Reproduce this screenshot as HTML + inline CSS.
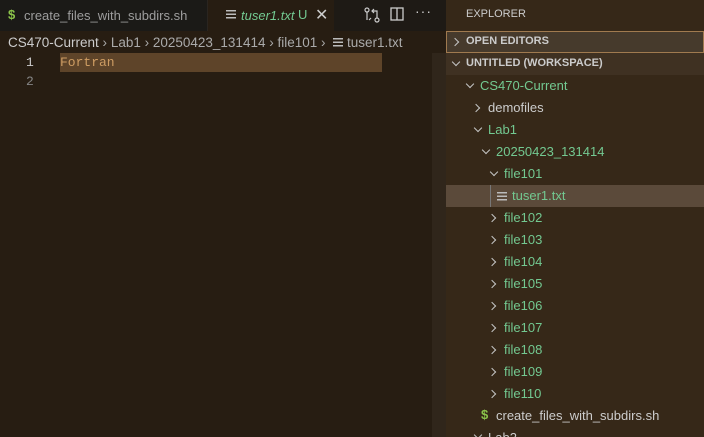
<!DOCTYPE html><html style="overflow:hidden;height:437px"><head><style>
body{margin:0;width:704px;height:437px;overflow:hidden;background:#271d12;font-family:"Liberation Sans",sans-serif;font-size:13px;position:relative}
.a{position:absolute;white-space:nowrap}
.g{color:#73c991}.w{color:#cccccc}
.chev{position:absolute;width:5px;height:5px;border-right:1.3px solid #c5c5c5;border-bottom:1.3px solid #c5c5c5}
.r{transform:rotate(-45deg)}.d{transform:rotate(45deg)}
.ic{position:absolute;width:10px;height:9px;background:linear-gradient(#bbb 0 1.5px,transparent 1.5px 3.5px,#bbb 3.5px 5px,transparent 5px 7px,#bbb 7px 8.5px,transparent 8.5px)}
</style></head><body>
<div class="a" style="left:0;top:0;width:446px;height:31px;background:#1e1a15"></div>
<div class="a" style="left:0;top:0;width:207px;height:31px;background:#1b1a17;border-right:1px solid #2a2520"></div>
<div class="a" style="left:208px;top:0;width:126px;height:31px;background:#271d12"></div>
<div class="a" style="left:8px;top:7px;color:#8bc34a;font-weight:bold">$</div>
<div class="a" style="left:24px;top:8px;color:#9d9d9d">create_files_with_subdirs.sh</div>
<div class="ic" style="left:226px;top:10px"></div>
<div class="a g" style="left:241px;top:8px;font-style:italic">tuser1.txt</div>
<div class="a g" style="left:298px;top:7px">U</div>
<div class="a w" style="left:315px;top:5px;font-size:16px">✕</div>
<svg class="a" style="left:363px;top:6px" width="18" height="18" viewBox="0 0 18 18" fill="none" stroke="#ccc" stroke-width="1.2"><circle cx="4" cy="4" r="2"/><circle cx="14" cy="14" r="2"/><path d="M4 6v8M14 12V5H9M11 3L9 5l2 2M6 14l2-2"/></svg>
<svg class="a" style="left:390px;top:7px" width="14" height="14" fill="none" stroke="#ccc" stroke-width="1.3"><rect x="1" y="1" width="12" height="12"/><path d="M7 1v12"/></svg>
<div class="a w" style="left:415px;top:3px;font-size:14px;letter-spacing:1px">···</div>
<div class="a" style="left:8px;top:35px;color:#ccc;font-size:13.5px">CS470-Current <span style="color:#aaa">›</span> <span style="color:#aaa">Lab1 › 20250423_131414 › file101 ›</span></div>
<div class="ic" style="left:333px;top:38px"></div>
<div class="a" style="left:347px;top:35px;color:#aaa;font-size:13.5px">tuser1.txt</div>
<div class="a" style="left:60px;top:53px;width:322px;height:19px;background:#5e4429"></div>
<div class="a" style="left:26px;top:55px;color:#ccc;font-family:'Liberation Mono',monospace">1</div>
<div class="a" style="left:26px;top:74px;color:#858585;font-family:'Liberation Mono',monospace">2</div>
<div class="a" style="left:60px;top:55px;color:#ce9d63;font-family:'Liberation Mono',monospace">Fortran</div>
<div class="a" style="left:432px;top:53px;width:14px;height:384px;background:#30261b"></div>
<div class="a" style="left:446px;top:0;width:258px;height:437px;background:#362818"></div>
<div class="a" style="left:466px;top:8px;color:#ccc;font-size:11px">EXPLORER</div>
<div class="a" style="left:446px;top:31px;width:256px;height:20px;background:#463a2c;border:1px solid #a07a4f"></div>
<div class="a" style="left:446px;top:53px;width:258px;height:22px;background:#3f3122"></div>
<div class="chev r" style="left:452px;top:39px"></div>
<div class="a w" style="left:466px;top:35px;font-size:11px;font-weight:bold">OPEN EDITORS</div>
<div class="chev d" style="left:453px;top:59px"></div>
<div class="a w" style="left:466px;top:57px;font-size:11px;font-weight:bold">UNTITLED (WORKSPACE)</div>
<div class="a" style="left:446px;top:185px;width:258px;height:22px;background:#5b4a3a"></div>
<div class="a" style="left:490px;top:185px;width:1px;height:22px;background:#777"></div>
<div class="chev d" style="left:467px;top:81px"></div><div class="a g" style="left:480px;top:78px">CS470-Current</div>
<div class="chev r" style="left:473px;top:105px"></div><div class="a w" style="left:488px;top:100px">demofiles</div>
<div class="chev d" style="left:475px;top:125px"></div><div class="a g" style="left:488px;top:122px">Lab1</div>
<div class="chev d" style="left:483px;top:147px"></div><div class="a g" style="left:496px;top:144px">20250423_131414</div>
<div class="chev d" style="left:491px;top:169px"></div><div class="a g" style="left:504px;top:166px">file101</div>
<div class="ic" style="left:497px;top:192px"></div><div class="a g" style="left:512px;top:188px">tuser1.txt</div>
<div class="chev r" style="left:489px;top:215px"></div><div class="a g" style="left:504px;top:210px">file102</div>
<div class="chev r" style="left:489px;top:237px"></div><div class="a g" style="left:504px;top:232px">file103</div>
<div class="chev r" style="left:489px;top:259px"></div><div class="a g" style="left:504px;top:254px">file104</div>
<div class="chev r" style="left:489px;top:281px"></div><div class="a g" style="left:504px;top:276px">file105</div>
<div class="chev r" style="left:489px;top:303px"></div><div class="a g" style="left:504px;top:298px">file106</div>
<div class="chev r" style="left:489px;top:325px"></div><div class="a g" style="left:504px;top:320px">file107</div>
<div class="chev r" style="left:489px;top:347px"></div><div class="a g" style="left:504px;top:342px">file108</div>
<div class="chev r" style="left:489px;top:369px"></div><div class="a g" style="left:504px;top:364px">file109</div>
<div class="chev r" style="left:489px;top:391px"></div><div class="a g" style="left:504px;top:386px">file110</div>
<div class="a" style="left:481px;top:407px;color:#8bc34a;font-weight:bold">$</div><div class="a w" style="left:496px;top:408px">create_files_with_subdirs.sh</div>
<div class="chev d" style="left:475px;top:432px"></div><div class="a w" style="left:488px;top:430px;height:7px;overflow:hidden">Lab2</div>
</body></html>
